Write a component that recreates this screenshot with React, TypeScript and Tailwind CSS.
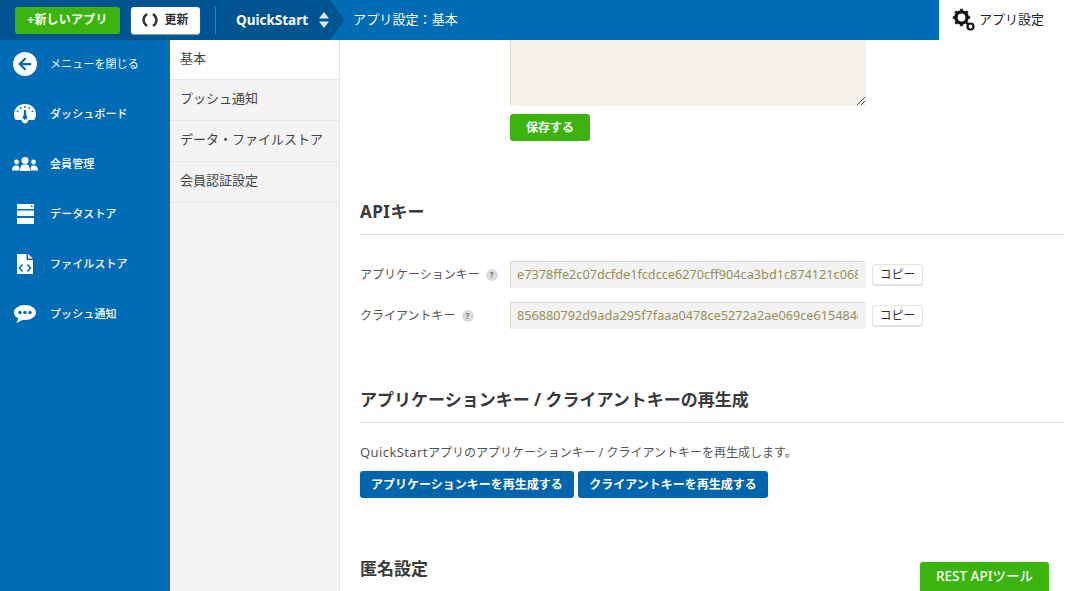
import { ArrowLeft } from 'lucide-react';
import type { ReactNode } from 'react';

const font = 'font-["Noto_Sans","Noto_Sans_CJK_JP",sans-serif]';

const GaugeIcon = () => (
	<svg width="24" height="20" viewBox="0 0 24 20" fill="white">
		<path d="M12 0C5.400 0 1 4.600 1 10.500c0 2.300.7 4.200 1.800 5.500h5.700c.6 2 2 3.500 3.500 3.500s2.900-1.500 3.500-3.500h5.700c1.100-1.300 1.800-3.200 1.800-5.500C23 4.600 18.600 0 12 0z" />
		<g fill="#006cb5">
			<rect x="11.300" y="2" width="1.400" height="2" />
			<rect x="7" y="3.200" width="1.400" height="1.800" transform="rotate(-30 7.700 4)" />
			<rect x="15.600" y="3.200" width="1.400" height="1.800" transform="rotate(30 16.300 4)" />
			<rect x="3.800" y="6.300" width="1.400" height="1.800" transform="rotate(-60 4.500 7.200)" />
			<rect x="18.800" y="6.300" width="1.400" height="1.800" transform="rotate(60 19.500 7.200)" />
			<path d="M11 6h2l.3 5.500a2.200 2.200 0 1 1-2.600 0z" />
		</g>
	</svg>
);

const UsersIcon = () => (
	<svg width="26" height="14" viewBox="0 0 26 14" fill="white">
		<circle cx="4.500" cy="5" r="2.400" />
		<path d="M0 13.500c0-2.500 1-4.500 3-5h3c1 .7 1.500 2 1.500 5z" />
		<circle cx="21.500" cy="5" r="2.400" />
		<path d="M26 13.500c0-2.500-1-4.500-3-5h-3c-1 .7-1.500 2-1.500 5z" />
		<circle cx="13" cy="3.500" r="3.500" />
		<path d="M8 14c0-3.500 1-6 3-6.500h4c2 .5 3 3 3 6.500z" />
	</svg>
);

const DatabaseIcon = () => (
	<svg width="17" height="20" viewBox="0 0 17 20" fill="white">
		<path d="M0 0h17v5H0z" />
		<rect x="14" y="1.500" width="1.500" height="1.500" fill="#006cb5" />
		<rect y="6.500" width="17" height="5.500" />
		<rect y="14" width="17" height="6" />
	</svg>
);

const FileCodeIcon = () => (
	<svg width="16" height="20" viewBox="0 0 16 20">
		<path d="M0 0h9.500v6H16v14H0z" fill="white" />
		<path d="M11 0l5 4.500h-5z" fill="white" />
		<path d="M5.500 10.500L2.500 14l3 3.500M10.500 10.500l3 3.500-3 3.500" stroke="#006cb5" strokeWidth="1.500" fill="none" />
	</svg>
);

const ChatIcon = () => (
	<svg width="22" height="18" viewBox="0 0 22 18" fill="white">
		<path d="M11 0C5 0 0 3.300 0 7.500c0 2.500 1.700 4.600 4.300 6-.2 1.500-1.100 3-2.300 4 2.700-.2 5-1.300 6.500-2.700.8.200 1.700.2 2.500.2 6 0 11-3.300 11-7.500S17 0 11 0z" />
		<circle cx="6" cy="7.500" r="1.700" fill="#006cb5" />
		<circle cx="11" cy="7.500" r="1.700" fill="#006cb5" />
		<circle cx="16" cy="7.500" r="1.700" fill="#006cb5" />
	</svg>
);

const GearsIcon = () => (
	<svg width="24" height="24" viewBox="0 0 24 24">
		<circle cx="9.500" cy="9.500" r="5.600" fill="none" stroke="#111" strokeWidth="3.400" />
		<g stroke="#111" strokeWidth="2.600">
			<path d="M9.500 0.800v3M9.500 15.200v3M0.800 9.500h3M15.200 9.500h3M3.300 3.300l2.100 2.100M13.600 13.600l2.100 2.100M3.300 15.700l2.100-2.100M13.600 5.400l2.100-2.100" />
		</g>
		<circle cx="18.500" cy="18.500" r="3" fill="none" stroke="#111" strokeWidth="2.200" />
	</svg>
);

const RefreshIcon = () => (
	<svg width="16" height="14" viewBox="0 0 16 14" fill="none" stroke="#333" strokeWidth="2.400">
		<path d="M5 1C2 3 1.500 5 1.500 7S2.500 11 5 13" />
		<path d="M11 1c2.500 2 3.500 4 3.500 6s-.5 4-3.500 6" />
	</svg>
);

const menuItems: { label: string; icon: ReactNode }[] = [
	{ label: 'ダッシュボード', icon: <GaugeIcon /> },
	{ label: '会員管理', icon: <UsersIcon /> },
	{ label: 'データストア', icon: <DatabaseIcon /> },
	{ label: 'ファイルストア', icon: <FileCodeIcon /> },
	{ label: 'プッシュ通知', icon: <ChatIcon /> },
];

const subItems = ['プッシュ通知', 'データ・ファイルストア', '会員認証設定'];

const keys = [
	{ label: 'アプリケーションキー', value: 'e7378ffe2c07dcfde1fcdcce6270cff904ca3bd1c874121c068' },
	{ label: 'クライアントキー', value: '856880792d9ada295f7faaa0478ce5272a2ae069ce6154840' },
];

const Header = () => (
	<header className="flex h-10 shrink-0 items-stretch bg-[#006cb5]">
		<div className="flex items-center bg-[#005590] pl-[15px]">
			<button className="h-[27px] w-[105px] rounded-[3px] bg-[#3cb40f] text-[12px] font-bold tracking-[0.2px] text-white">
				+新しいアプリ
			</button>
			<button className="ml-[11px] flex h-[27px] w-[69px] items-center justify-center gap-[6px] rounded-[3px] bg-white text-[12px] font-bold text-[#333] shadow-[0_1px_1px_#8aa]">
				<RefreshIcon />
				更新
			</button>
			<div className="ml-[15px] h-[27px] w-px bg-[#3d82b0]" />
			<div className="ml-5 flex items-center gap-[11px] pr-[1px] text-[13.5px] font-bold text-white">
				QuickStart
				<svg width="10" height="16" viewBox="0 0 10 16" fill="#dce8f2">
					<path d="M5 0l5 6.500H0zM5 16L0 9.500h10z" />
				</svg>
			</div>
		</div>
		<div className="h-10 w-[14px] bg-[#005590] [clip-path:polygon(0_0,100%_50%,0_100%)]" />
		<div className="ml-[9px] flex items-center text-[13px] tracking-[0.1px] text-white">アプリ設定：基本</div>
		<div className="ml-auto flex w-[127px] items-center gap-[3px] bg-white pl-[13px] text-[13px] text-[#222]">
			<GearsIcon />
			アプリ設定
		</div>
	</header>
);

const Sidebar = () => (
	<aside className="w-[170px] shrink-0 bg-[#006cb5] text-[11px] tracking-[0.1px] text-white">
		<div className="flex h-[47px] items-center pl-[13px] pt-[1px]">
			<div className="flex h-6 w-6 items-center justify-center rounded-full bg-white">
				<ArrowLeft size={18} strokeWidth={3} color="#006cb5" />
			</div>
			<span className="ml-[13px]">メニューを閉じる</span>
		</div>
		{menuItems.map((item) => (
			<div key={item.label} className="mt-[4px] flex h-[46px] items-center">
				<div className="flex w-[50px] justify-center">{item.icon}</div>
				<span className="font-medium">{item.label}</span>
			</div>
		))}
	</aside>
);

const SubNav = () => (
	<nav className="w-[170px] shrink-0 border-r border-[#e6e6e6] bg-[#f4f4f4] text-[13px] text-[#444]">
		<div className="flex h-[39px] items-center bg-white pb-[2px] pl-[10px]">基本</div>
		{subItems.map((label) => (
			<div key={label} className="flex h-[41px] items-center border-t border-[#e6e6e6] pb-[2px] pl-[10px]">
				{label}
			</div>
		))}
		<div className="border-t border-[#e6e6e6]" />
	</nav>
);

const SectionTitle = ({ children, className }: { children: ReactNode; className: string }) => (
	<h2 className={`border-b border-[#ddd] text-[17px] leading-[24px] font-bold text-[#3a3a3a] ${className}`}>{children}</h2>
);

const Content = () => (
	<main className="flex-1 bg-white pl-5 pr-[2px]">
		<div className="pl-[150px]">
			<div className="relative h-[66px] w-[356px] border-l border-[#dcd9c8] bg-[#f5f3e7]">
				<svg className="absolute bottom-[1px] right-[1px]" width="8" height="8" viewBox="0 0 8 8" stroke="#555">
					<path d="M0 8L8 0M4 8l4-4" />
				</svg>
			</div>
			<button className="mt-2 h-[27px] w-20 rounded-[3px] bg-[#3cb40f] text-[12px] font-bold text-white">
				保存する
			</button>
		</div>

		<SectionTitle className="mt-[59px] h-[35px]">
			<span className="tracking-[0.5px]">API</span>キー
		</SectionTitle>

		<div className="mt-[26px] flex flex-col gap-[14px]">
			{keys.map((key) => (
				<div key={key.label} className="flex items-center">
					<div className="flex w-[150px] items-center gap-[6px] text-[12px] text-[#555]">
						{key.label}
						<span className="flex h-3 w-3 items-center justify-center rounded-full bg-[#ddd] text-[8px] font-bold text-[#777]">
							?
						</span>
					</div>
					<div className="h-[27px] w-[356px] rounded-[2px] border-t border-l border-[#d8d5c6] bg-[#f2f2f2] pl-[6px] pr-[8px] text-[12.7px] leading-[25px] text-[#9a8f55]">
						<div className="overflow-hidden whitespace-nowrap">{key.value}</div>
					</div>
					<button className="ml-[6px] h-[21px] w-[51px] rounded-[3px] border border-[#e4e4e4] bg-white text-[12px] text-[#333] shadow-[0_1px_1px_#ddd]">
						コピー
					</button>
				</div>
			))}
		</div>

		<SectionTitle className="mt-[59px] h-[35px]">アプリケーションキー / クライアントキーの再生成</SectionTitle>

		<p className="mt-[21px] text-[12px] leading-[18px] text-[#555]">
			<span className="text-[13px] leading-none tracking-[0.4px]">QuickStart</span>
			アプリのアプリケーションキー / クライアントキーを再生成します。
		</p>
		<div className="mt-[9px] flex gap-1">
			<button className="h-[27px] w-[214px] rounded-[3px] bg-[#0065ad] text-[12px] font-bold text-white">
				アプリケーションキーを再生成する
			</button>
			<button className="h-[27px] w-[190px] rounded-[3px] bg-[#0065ad] text-[12px] font-bold text-white">
				クライアントキーを再生成する
			</button>
		</div>

		<h2 className="mt-[59px] text-[17px] leading-[24px] font-bold text-[#3a3a3a]">匿名設定</h2>
	</main>
);

const App = () => {
	return (
		<div className={`relative flex h-[591px] w-[1066px] flex-col overflow-hidden bg-white ${font}`}>
			<Header />
			<div className="flex min-h-0 flex-1">
				<Sidebar />
				<SubNav />
				<Content />
			</div>
			<button className="absolute bottom-0 left-[920px] h-[29px] w-[129px] rounded-t-[3px] bg-[#3cb40f] text-[13.5px] font-medium text-white">
				REST APIツール
			</button>
		</div>
	);
};

export default App;
